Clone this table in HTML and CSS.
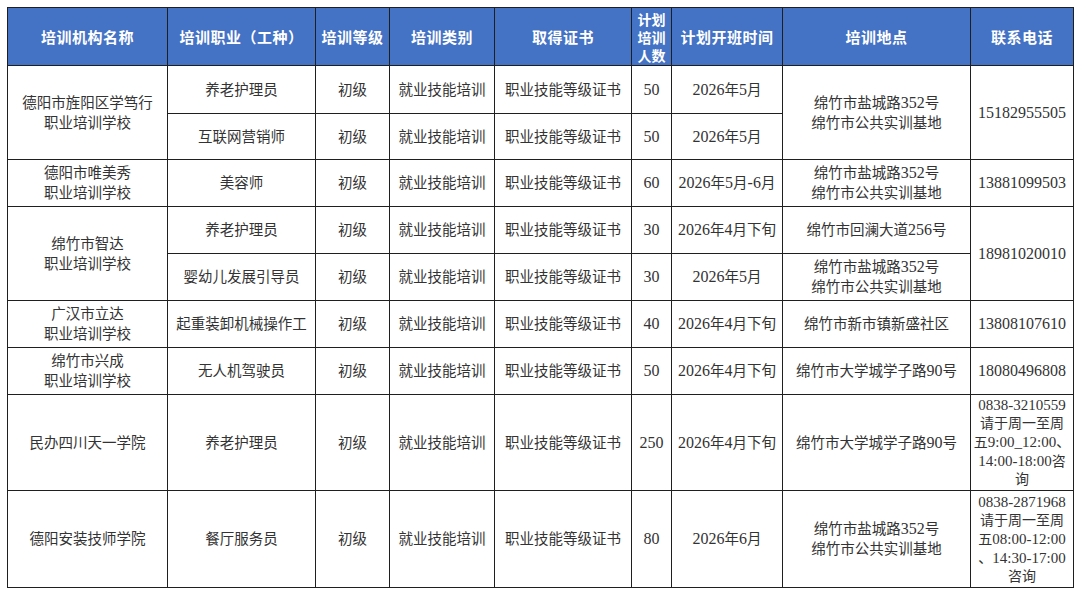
FILE: index.html
```html
<!DOCTYPE html>
<html lang="zh-CN">
<head>
<meta charset="utf-8">
<title>培训计划</title>
<link rel="stylesheet" href="styles.css">
</head>
<body>
<table class="plan">
  <colgroup>
    <col class="c-org"><col class="c-job"><col class="c-lvl"><col class="c-type"><col class="c-cert"><col class="c-num"><col class="c-time"><col class="c-loc"><col class="c-tel">
  </colgroup>
  <thead>
    <tr class="r-head">
      <th>培训机构名称</th>
      <th>培训职业（工种）</th>
      <th>培训等级</th>
      <th>培训类别</th>
      <th>取得证书</th>
      <th class="num">计划<br>培训<br>人数</th>
      <th>计划开班时间</th>
      <th>培训地点</th>
      <th>联系电话</th>
    </tr>
  </thead>
  <tbody>
    <tr class="r-48">
      <td rowspan="2">德阳市旌阳区学笃行<br>职业培训学校</td>
      <td class="g">养老护理员</td>
      <td>初级</td>
      <td>就业技能培训</td>
      <td>职业技能等级证书</td>
      <td><span class="n">50</span></td>
      <td class="g"><span class="n">2026</span>年<span class="n">5</span>月</td>
      <td rowspan="2">绵竹市盐城路<span class="n">352</span>号<br>绵竹市公共实训基地</td>
      <td rowspan="2"><span class="n">15182955505</span></td>
    </tr>
    <tr class="r-46">
      <td class="g">互联网营销师</td>
      <td>初级</td>
      <td>就业技能培训</td>
      <td>职业技能等级证书</td>
      <td><span class="n">50</span></td>
      <td class="g"><span class="n">2026</span>年<span class="n">5</span>月</td>
    </tr>
    <tr class="r-47">
      <td>德阳市唯美秀<br>职业培训学校</td>
      <td class="g">美容师</td>
      <td>初级</td>
      <td>就业技能培训</td>
      <td>职业技能等级证书</td>
      <td><span class="n">60</span></td>
      <td class="g"><span class="n">2026</span>年<span class="n">5</span>月<span class="n">-6</span>月</td>
      <td>绵竹市盐城路<span class="n">352</span>号<br>绵竹市公共实训基地</td>
      <td><span class="n">13881099503</span></td>
    </tr>
    <tr class="r-47">
      <td rowspan="2">绵竹市智达<br>职业培训学校</td>
      <td class="g">养老护理员</td>
      <td>初级</td>
      <td>就业技能培训</td>
      <td>职业技能等级证书</td>
      <td><span class="n">30</span></td>
      <td class="g"><span class="n">2026</span>年<span class="n">4</span>月下旬</td>
      <td>绵竹市回澜大道<span class="n">256</span>号</td>
      <td rowspan="2"><span class="n">18981020010</span></td>
    </tr>
    <tr class="r-47">
      <td class="g">婴幼儿发展引导员</td>
      <td>初级</td>
      <td>就业技能培训</td>
      <td>职业技能等级证书</td>
      <td><span class="n">30</span></td>
      <td class="g"><span class="n">2026</span>年<span class="n">5</span>月</td>
      <td>绵竹市盐城路<span class="n">352</span>号<br>绵竹市公共实训基地</td>
    </tr>
    <tr class="r-47">
      <td>广汉市立达<br>职业培训学校</td>
      <td class="g">起重装卸机械操作工</td>
      <td>初级</td>
      <td>就业技能培训</td>
      <td>职业技能等级证书</td>
      <td><span class="n">40</span></td>
      <td class="g"><span class="n">2026</span>年<span class="n">4</span>月下旬</td>
      <td>绵竹市新市镇新盛社区</td>
      <td><span class="n">13808107610</span></td>
    </tr>
    <tr class="r-47">
      <td>绵竹市兴成<br>职业培训学校</td>
      <td class="g">无人机驾驶员</td>
      <td>初级</td>
      <td>就业技能培训</td>
      <td>职业技能等级证书</td>
      <td><span class="n">50</span></td>
      <td class="g"><span class="n">2026</span>年<span class="n">4</span>月下旬</td>
      <td>绵竹市大学城学子路<span class="n">90</span>号</td>
      <td><span class="n">18080496808</span></td>
    </tr>
    <tr class="r-96">
      <td>民办四川天一学院</td>
      <td class="g">养老护理员</td>
      <td>初级</td>
      <td>就业技能培训</td>
      <td>职业技能等级证书</td>
      <td><span class="n">250</span></td>
      <td class="g"><span class="n">2026</span>年<span class="n">4</span>月下旬</td>
      <td>绵竹市大学城学子路<span class="n">90</span>号</td>
      <td class="tel"><span class="n">0838-3210559</span><br>请于周一至周<br>五<span class="n">9:00_12:00</span>、<br><span class="n">14:00-18:00</span>咨<br>询</td>
    </tr>
    <tr class="r-97">
      <td>德阳安装技师学院</td>
      <td class="g">餐厅服务员</td>
      <td>初级</td>
      <td>就业技能培训</td>
      <td>职业技能等级证书</td>
      <td><span class="n">80</span></td>
      <td class="g"><span class="n">2026</span>年<span class="n">6</span>月</td>
      <td>绵竹市盐城路<span class="n">352</span>号<br>绵竹市公共实训基地</td>
      <td class="tel"><span class="n">0838-2871968</span><br>请于周一至周<br>五<span class="n">08:00-12:00</span><br>、<span class="n">14:30-17:00</span><br>咨询</td>
    </tr>
  </tbody>
</table>
</body>
</html>
```

FILE: styles.css
```css
html, body {
  margin: 0;
  padding: 0;
  background: #ffffff;
}

body {
  padding: 7px;
}

.plan {
  width: 1066px;
  table-layout: fixed;
  border-collapse: collapse;
  font-family: "Liberation Serif", "Noto Sans CJK SC", serif;
  font-size: 14.5px;
  color: #333333;
}

.c-org { width: 160px; }
.c-job { width: 148px; }
.c-lvl { width: 74px; }
.c-type { width: 105px; }
.c-cert { width: 137px; }
.c-num { width: 40px; }
.c-time { width: 111px; }
.c-loc { width: 188px; }
.c-tel { width: 103px; }

.plan th,
.plan td {
  border: 1px solid #1f1f1f;
  padding: 0;
  text-align: center;
  vertical-align: middle;
  white-space: nowrap;
  overflow: hidden;
}

.plan th {
  background: #4472c4;
  color: #ffffff;
  font-family: "Noto Sans CJK SC", "Liberation Sans", sans-serif;
  font-weight: 700;
  font-size: 15px;
  line-height: 18px;
  letter-spacing: 0.5px;
}

.plan th.num {
  font-size: 14px;
  line-height: 18px;
  letter-spacing: 0;
}

.plan td {
  line-height: 20px;
}

.plan td.g {
  border-left-color: #8a8a8a;
}

.plan td.tel {
  line-height: 18px;
  font-size: 14px;
}

.n {
  font-size: 16px;
}

.plan td.tel .n {
  font-size: 15px;
  line-height: 18px;
}

.r-head { height: 58px; }
.r-48 { height: 48px; }
.r-46 { height: 46px; }
.r-47 { height: 47px; }
.r-96 { height: 96px; }
.r-97 { height: 97px; }
```
